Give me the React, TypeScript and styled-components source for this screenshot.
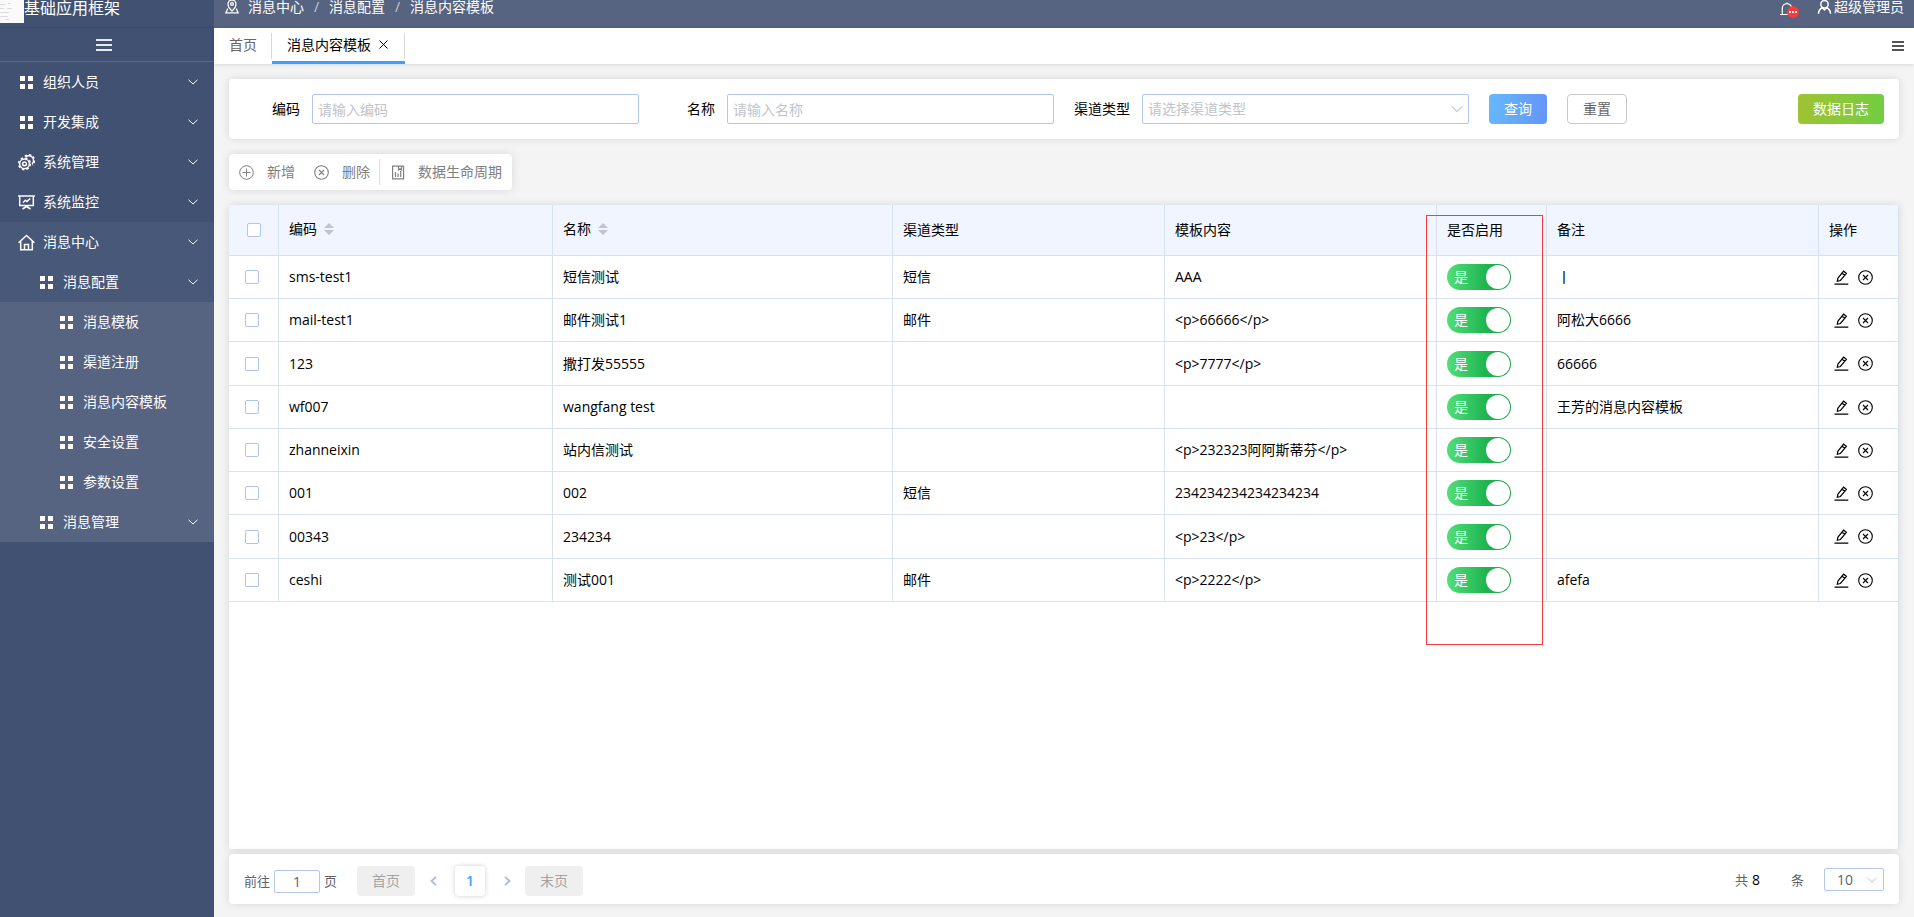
import React from "react";
import styled, { createGlobalStyle } from "styled-components";

const GlobalStyle = createGlobalStyle`
  *, *::before, *::after { box-sizing: border-box; }
  body {
    margin: 0;
    background: #f4f4f4;
    color: #000;
    font: 14px/20px "Open Sans", "Noto Sans CJK SC", sans-serif;
  }
  button, input, select { font: inherit; color: inherit; margin: 0; }
  button { border: 0; padding: 0; background: none; cursor: pointer; }
  a { color: inherit; text-decoration: none; }
  ul, ol { list-style: none; margin: 0; padding: 0; }
  svg { display: block; flex: none; }
`;

/* ---------- layout ---------- */

const Page = styled.div`
  display: flex;
  min-height: 100vh;
`;

const Sidebar = styled.aside`
  flex: none;
  width: 214px;
  background: #405172;
  color: #fff;
`;

const Brand = styled.div`
  display: flex;
  height: 28px;
  font-size: 16px;
  line-height: 16px;
  white-space: nowrap;
  border-bottom: 1px solid #3b4b6b;
`;

const CollapseButton = styled.button`
  display: flex;
  align-items: center;
  justify-content: center;
  width: 100%;
  height: 34px;
  padding-right: 6px;
  color: #e4e8ef;
  border-bottom: 1px solid #596886;
`;

const levelColors = ["transparent", "#475878", "#566482"];

const MenuGroup = styled.ul<{ $level: number }>`
  background: ${(p) => levelColors[p.$level]};
`;

const MenuItem = styled.button<{ $depth: number; $tone: number }>`
  display: flex;
  align-items: center;
  gap: 8px;
  width: 100%;
  height: 40px;
  padding: 0 16px 0 ${(p) => 18 + p.$depth * 20}px;
  background: ${(p) => levelColors[p.$tone]};
  text-align: left;
`;

const MenuLabel = styled.span`
  flex: 1;
`;

const Main = styled.div`
  display: flex;
  flex: 1;
  flex-direction: column;
  min-width: 0;
`;

const TopBar = styled.header`
  display: flex;
  align-items: flex-start;
  justify-content: space-between;
  height: 28px;
  padding: 0 10px 0 11px;
  background: #566482;
  color: #fff;
  line-height: 14px;
`;

const Location = styled.nav`
  display: flex;
  gap: 9px;
`;

const Breadcrumb = styled.ol`
  display: flex;

  li { display: flex; }
  li + li::before {
    content: "/";
    width: 25px;
    color: #c8cdd8;
    text-align: center;
  }
`;

const UserArea = styled.div`
  display: flex;
  gap: 18px;
`;

const BellButton = styled.button`
  position: relative;
  width: 19px;
  height: 18px;
`;

const BellBadge = styled.span`
  position: absolute;
  right: 0;
  bottom: 0;
  display: flex;
  align-items: center;
  justify-content: center;
  gap: 1px;
  width: 12px;
  height: 12px;
  border-radius: 50%;
  background: #f83b3b;

  i { width: 2px; height: 2px; background: #fff; }
`;

const UserButton = styled.button`
  display: flex;
  gap: 2px;
  line-height: 14px;
`;

const TabBar = styled.nav`
  display: flex;
  align-items: stretch;
  height: 36px;
  padding: 0 10px 0 15px;
  background: #fff;
  box-shadow: 0 1px 4px rgba(0, 0, 0, 0.12);
`;

const Tab = styled.div<{ $active?: boolean }>`
  position: relative;
  display: flex;
  align-items: center;
  gap: 8px;
  padding: ${(p) => (p.$active ? "0 17px 0 15px" : "0 15px 0 0")};
  color: ${(p) => (p.$active ? "#000" : "#666")};
  border-bottom: 3px solid ${(p) => (p.$active ? "#409eff" : "transparent")};

  &::after {
    content: "";
    position: absolute;
    top: 5px;
    right: 0;
    width: 1px;
    height: 26px;
    background: #d8d8d8;
  }
`;

const TabMenuButton = styled.button`
  margin-left: auto;
  color: #555;
`;

const Content = styled.main`
  display: flex;
  flex: 1;
  flex-direction: column;
  align-items: stretch;
  padding: 15px 15px 13px;
`;

const Panel = styled.section`
  background: #fff;
  border-radius: 4px;
  box-shadow: 0 0 8px rgba(0, 0, 0, 0.12);
`;

/* ---------- search form ---------- */

const SearchForm = styled.form`
  display: flex;
  align-items: center;
  gap: 20px;
  height: 60px;
  padding: 0 15px;
`;

const Field = styled.div`
  display: flex;
  flex: 0 1 395px;
  align-items: center;
  gap: 12px;
  min-width: 0;

  label { flex: none; width: 56px; text-align: right; }
`;

const TextInput = styled.input`
  flex: 1;
  min-width: 0;
  height: 30px;
  padding: 0 5px;
  border: 1px solid #b3c6ec;
  border-radius: 2px;
  background: #fff;
  outline: 0;

  &::placeholder { color: #c0c4cc; opacity: 1; }
`;

const SelectWrap = styled.div<{ $inset: number }>`
  position: relative;
  display: flex;
  flex: 1;
  min-width: 0;

  svg {
    position: absolute;
    top: 50%;
    right: ${(p) => p.$inset}px;
    transform: translateY(-50%);
    color: #b7c8e8;
    pointer-events: none;
  }
`;

const Select = styled.select<{ $small?: boolean }>`
  flex: 1;
  min-width: 0;
  height: ${(p) => (p.$small ? 23 : 30)}px;
  padding: 0 ${(p) => (p.$small ? 12 : 5)}px;
  border: 1px solid #b3c6ec;
  border-radius: 2px;
  background: #fff;
  color: ${(p) => (p.$small ? "#606266" : "#c0c4cc")};
  appearance: none;
  outline: 0;
`;

const buttonLooks = {
  primary: "background: linear-gradient(90deg, #66b8fb, #6495f9); color: #fff;",
  plain: "background: #fff; color: #666; border: 1px solid #c8c8c8;",
  success: "background: linear-gradient(90deg, #9fc332, #72cd43); color: #fff;",
  muted: "background: #efefef; color: #a3a3a3;",
};

const Button = styled.button<{ $look: keyof typeof buttonLooks; $end?: boolean }>`
  flex: none;
  height: 30px;
  padding: 0 15px;
  border-radius: 4px;
  white-space: nowrap;
  ${(p) => buttonLooks[p.$look]}
  ${(p) => (p.$end ? "margin-left: auto;" : "")}
`;

/* ---------- toolbar ---------- */

const Toolbar = styled(Panel)`
  display: flex;
  align-self: flex-start;
  align-items: center;
  height: 36px;
  margin: 15px 0;
  padding: 0 10px;
`;

const ToolButton = styled.button`
  display: flex;
  align-items: center;
  gap: 13px;
  color: #808080;

  & + & { margin-left: 19px; }
`;

const ToolDivider = styled.span`
  width: 1px;
  height: 26px;
  margin: 0 11px 0 9px;
  background: #d5deea;
`;

/* ---------- table ---------- */

const TablePanel = styled(Panel)`
  flex: 1;
  border-right: 1px solid #d9e2f0;
  border-radius: 2px;
`;

const Table = styled.table`
  width: 100%;
  table-layout: fixed;
  border-collapse: separate;
  border-spacing: 0;

  th, td {
    padding: 0 10px;
    border-bottom: 1px solid #d8e1ef;
    border-left: 1px solid #d8e1ef;
    font-weight: 400;
    text-align: left;
    white-space: nowrap;
  }
  th:first-child, td:first-child { border-left: 0; }
  th { position: relative; height: 51px; background: #f0f5ff; }
  td { height: 43px; }
  tbody tr:nth-child(4n + 3) td { height: 44px; }
  td:first-child { padding-left: 16px; }
  th:first-child { padding-left: 18px; }
`;

const Column = styled.col<{ $width?: number }>`
  ${(p) => (p.$width ? `width: ${p.$width}px;` : "")}
`;

const CheckBox = styled.input`
  display: block;
  width: 14px;
  height: 14px;
  appearance: none;
  background: #fff;
  border: 1px solid #b0c4ee;
  border-radius: 2px;
  &:checked { background: #409eff; }
`;

const SortButton = styled.button`
  display: flex;
  align-items: center;
  gap: 7px;
  padding-bottom: 2px;
`;

const Highlight = styled.span`
  position: absolute;
  z-index: 1;
  top: 10px;
  left: -11px;
  width: 117px;
  height: 430px;
  border: 1px solid #f53b3b;
  pointer-events: none;
`;

const Switch = styled.label`
  position: relative;
  display: flex;
  align-items: center;
  width: 64px;
  height: 26px;
  padding-left: 7px;
  border-radius: 13px;
  background: linear-gradient(90deg, #52de78, #1fb551 60%, #1aa548);
  color: #fff;
  cursor: pointer;

  input { position: absolute; opacity: 0; margin: 0; }
  &::after {
    content: "";
    position: absolute;
    top: 1px;
    right: 1px;
    width: 24px;
    height: 24px;
    border-radius: 50%;
    background: #fff;
  }
`;

const RowActions = styled.div`
  display: flex;
  gap: 9px;
  padding-left: 5px;
`;

/* ---------- pagination ---------- */

const Pagination = styled(Panel)`
  display: flex;
  align-items: center;
  height: 50px;
  margin-top: 5px;
  padding: 4px 15px 0;
  color: #606266;
`;

const JumpField = styled.label`
  display: flex;
  align-items: center;
  gap: 4px;
  margin-right: 20px;
  font-size: 13px;
`;

const JumpInput = styled(TextInput)`
  flex: none;
  width: 46px;
  height: 23px;
  font-size: 14px;
  text-align: center;
`;

const PageArrow = styled.button`
  display: flex;
  align-items: center;
  justify-content: center;
  width: 36px;
  height: 30px;
  color: #a9bbdf;
`;

const PageNumber = styled.button`
  width: 30px;
  height: 30px;
  margin: 0 4px;
  border-radius: 4px;
  box-shadow: 0 0 5px rgba(0, 0, 0, 0.2);
  color: #409eff;
  font-weight: 600;
`;

const Total = styled.span`
  display: flex;
  gap: 4px;
  margin-left: auto;
  margin-bottom: 3px;
  font-size: 13px;

  b { margin-right: 27px; color: #000; font-size: 14px; font-weight: 400; }
`;

const PageSize = styled.div`
  display: flex;
  width: 60px;
  margin: 0 0 3px 20px;
`;

/* ---------- icons ---------- */

const stroke = { fill: "none", stroke: "currentColor", strokeWidth: 1 } as const;

const GridIcon = () => (
  <svg width="17" height="17" viewBox="0 0 17 17" fill="currentColor">
    <path d="M2 2h5v5H2zM10 2h5v5h-5zM2 10h5v5H2zM10 10h5v5h-5z" />
  </svg>
);

const GearsIcon = () => (
  <svg width="17" height="17" viewBox="0 0 17 17" {...stroke}>
    <circle cx="6.500" cy="9.800" r="4.800" strokeWidth={1.400} />
    <circle cx="6.500" cy="9.800" r="5.900" strokeWidth={1.500} strokeDasharray="2.400 2.230" />
    <circle cx="6.500" cy="9.800" r="1.900" strokeWidth={1.500} />
    <path strokeWidth={1.400} d="M7.500 3A4.600 4.600 0 1 1 14 10" />
    <path strokeWidth={1.500} strokeDasharray="2.400 1.900" d="M6.800 2.300A5.700 5.700 0 1 1 14.500 11" />
  </svg>
);

const MonitorIcon = () => (
  <svg width="17" height="17" viewBox="0 0 17 17" {...stroke} strokeWidth={1.500}>
    <path d="M0 2h17M1.700 2v9.500h13.600V2M5 8.500l2.500-2.200 1.500 1.200 3.200-3M8.500 11.500v2M8.500 12.500L4.500 15M8.500 12.500l4 2.500" />
  </svg>
);

const HomeIcon = () => (
  <svg width="17" height="17" viewBox="0 0 17 17" {...stroke} strokeWidth={1.500}>
    <path d="M.6 8.800L8.500 1.500l7.900 7.300M2.700 7v8.700h11.600V7M6.500 15.500v-5h4v5" />
  </svg>
);

const menuIcons = { grid: GridIcon, gears: GearsIcon, monitor: MonitorIcon, home: HomeIcon };

const ChevronDown = ({ size = 10 }: { size?: number }) => (
  <svg width={size} height={size} viewBox="0 0 10 10" {...stroke}>
    <path d="M.5 2.800L5 7l4.500-4.200" />
  </svg>
);

const Bars = ({ width, gap, weight }: { width: number; gap: number; weight: number }) => (
  <svg width={width} height={gap * 2 + weight} fill="currentColor">
    {[0, 1, 2].map((i) => (
      <rect key={i} y={i * gap} width={width} height={weight} />
    ))}
  </svg>
);

const PinIcon = () => (
  <svg width="14" height="14" viewBox="0 0 14 14" {...stroke} strokeWidth={1.300}>
    <path d="M7 11C4.200 8.500 3 6.300 3 4a4 4 0 0 1 8 0C11 6.300 9.800 8.500 7 11z" />
    <circle cx="7" cy="4" r="1.400" />
    <path d="M2.800 8.500L.9 12.800h12.200L11.200 8.500" />
  </svg>
);

const BellIcon = () => (
  <svg width="14" height="16" viewBox="0 0 14 16" {...stroke} strokeWidth={1.200}>
    <path d="M0 13.500h14M2.300 13.500V7.300a4.700 4.700 0 0 1 9.400 0v6.200M7 2.600V1.500" />
  </svg>
);

const UserIcon = () => (
  <svg width="15" height="14" viewBox="0 0 15 14" {...stroke} strokeWidth={1.500}>
    <circle cx="7.500" cy="4.200" r="3.700" />
    <path d="M1.500 13.800c0-3 1.600-5 3.700-6.300l2.300 2.500 2.300-2.500c2.100 1.300 3.700 3.300 3.700 6.300" />
  </svg>
);

const CloseIcon = () => (
  <svg width="9" height="9" viewBox="0 0 9 9" {...stroke}>
    <path d="M.5.5l8 8M8.500.5l-8 8" />
  </svg>
);

const PlusCircle = () => (
  <svg width="15" height="15" viewBox="0 0 15 15" {...stroke}>
    <circle cx="7.500" cy="7.500" r="6.800" />
    <path d="M7.500 3.500v8M3.500 7.500h8" />
  </svg>
);

const CloseCircle = () => (
  <svg width="15" height="15" viewBox="0 0 15 15" {...stroke} strokeWidth={1.100}>
    <circle cx="7.500" cy="7.500" r="6.800" />
    <path d="M5 5l5 5M10 5l-5 5" />
  </svg>
);

const ReportIcon = () => (
  <svg width="14" height="15" viewBox="0 0 14 15" {...stroke} strokeWidth={1.200}>
    <path d="M1.600 1.100h11v12.800h-11zM4.500 12V7M7.100 12V8.500M9.700 12V6M7.500 1v4l1.500-1.300L10.500 5V1" />
  </svg>
);

const SortIcon = () => (
  <svg width="10" height="12" viewBox="0 0 10 12" fill="#c0c4cc">
    <path d="M0 5l5-5 5 5zM0 7l5 5 5-5z" />
  </svg>
);

const EditIcon = () => (
  <svg width="15" height="15" viewBox="0 0 15 15" {...stroke} strokeWidth={1.200}>
    <path d="M.5 14.200h13.800M3.300 11.300l.5-3L9.600 1.200l2.800 2.100-6 7.200zM8 3.200l2.800 2.100" />
  </svg>
);

const ArrowIcon = ({ next }: { next?: boolean }) => (
  <svg width="7" height="10" viewBox="0 0 7 10" {...stroke} strokeWidth={1.800}>
    <path d={next ? "M1 .8L5.500 5 1 9.200" : "M6 .8L1.500 5 6 9.200"} />
  </svg>
);

const LogoMark = () => (
  <svg width="24" height="23" viewBox="0 0 24 23">
    <path fill="#fafafa" d="M0 0h24v23H0z" />
    <path
      stroke="#dcdcdc"
      d="M0 4.500h5M8 3.500h3M0 8.500h4M7 8.500h5M0 12.500h9M0 16.500h8M5 19.500h4"
    />
  </svg>
);

/* ---------- data ---------- */

type MenuEntry = {
  label: string;
  icon: keyof typeof menuIcons;
  children?: MenuEntry[];
  expandable?: boolean;
};

const grid = (label: string): MenuEntry => ({ label, icon: "grid" });

const menu: MenuEntry[] = [
  { label: "组织人员", icon: "grid", expandable: true },
  { label: "开发集成", icon: "grid", expandable: true },
  { label: "系统管理", icon: "gears", expandable: true },
  { label: "系统监控", icon: "monitor", expandable: true },
  {
    label: "消息中心",
    icon: "home",
    expandable: true,
    children: [
      {
        label: "消息配置",
        icon: "grid",
        expandable: true,
        children: ["消息模板", "渠道注册", "消息内容模板", "安全设置", "参数设置"].map(grid),
      },
      { label: "消息管理", icon: "grid", expandable: true },
    ],
  },
];

const rows = [
  ["sms-test1", "短信测试", "短信", "AAA", "丨"],
  ["mail-test1", "邮件测试1", "邮件", "<p>66666</p>", "阿松大6666"],
  ["123", "撒打发55555", "", "<p>7777</p>", "66666"],
  ["wf007", "wangfang test", "", "", "王芳的消息内容模板"],
  ["zhanneixin", "站内信测试", "", "<p>232323阿阿斯蒂芬</p>", ""],
  ["001", "002", "短信", "234234234234234234", ""],
  ["00343", "234234", "", "<p>23</p>", ""],
  ["ceshi", "测试001", "邮件", "<p>2222</p>", "afefa"],
];

const MenuTree = ({ items, depth }: { items: MenuEntry[]; depth: number }) => (
  <MenuGroup $level={depth === 0 ? 0 : 2}>
    {items.map((item) => {
      const Icon = menuIcons[item.icon];
      return (
        <li key={item.label}>
          <MenuItem $depth={depth} $tone={item.children ? 1 : 0}>
            <Icon />
            <MenuLabel>{item.label}</MenuLabel>
            {item.expandable && <ChevronDown />}
          </MenuItem>
          {item.children && <MenuTree items={item.children} depth={depth + 1} />}
        </li>
      );
    })}
  </MenuGroup>
);

export default function App() {
  return (
    <Page>
      <GlobalStyle />
      <Sidebar>
        <Brand>
          <LogoMark />
          基础应用框架
        </Brand>
        <CollapseButton aria-label="收起菜单">
          <Bars width={16} gap={5} weight={2} />
        </CollapseButton>
        <MenuTree items={menu} depth={0} />
      </Sidebar>

      <Main>
        <TopBar>
          <Location>
            <PinIcon />
            <Breadcrumb>
              <li><a href="#center">消息中心</a></li>
              <li><a href="#config">消息配置</a></li>
              <li>消息内容模板</li>
            </Breadcrumb>
          </Location>
          <UserArea>
            <BellButton aria-label="通知">
              <BellIcon />
              <BellBadge><i /><i /><i /></BellBadge>
            </BellButton>
            <UserButton>
              <UserIcon />
              超级管理员
            </UserButton>
          </UserArea>
        </TopBar>

        <TabBar>
          <Tab><a href="#home">首页</a></Tab>
          <Tab $active>
            <a href="#template">消息内容模板</a>
            <button aria-label="关闭"><CloseIcon /></button>
          </Tab>
          <TabMenuButton aria-label="标签菜单">
            <Bars width={12} gap={4} weight={2} />
          </TabMenuButton>
        </TabBar>

        <Content>
          <Panel>
            <SearchForm onSubmit={(e) => e.preventDefault()}>
              <Field>
                <label htmlFor="code">编码</label>
                <TextInput id="code" placeholder="请输入编码" />
              </Field>
              <Field>
                <label htmlFor="name">名称</label>
                <TextInput id="name" placeholder="请输入名称" />
              </Field>
              <Field>
                <label htmlFor="channel">渠道类型</label>
                <SelectWrap $inset={6}>
                  <Select id="channel" defaultValue="">
                    <option value="">请选择渠道类型</option>
                    <option>短信</option>
                    <option>邮件</option>
                  </Select>
                  <ChevronDown size={12} />
                </SelectWrap>
              </Field>
              <Button $look="primary">查询</Button>
              <Button $look="plain" type="reset">重置</Button>
              <Button $look="success" type="button" $end>数据日志</Button>
            </SearchForm>
          </Panel>

          <Toolbar>
            <ToolButton><PlusCircle />新增</ToolButton>
            <ToolButton><CloseCircle />删除</ToolButton>
            <ToolDivider />
            <ToolButton><ReportIcon />数据生命周期</ToolButton>
          </Toolbar>

          <TablePanel>
            <Table>
              <colgroup>
                <Column $width={49} />
                <Column $width={274} />
                <Column />
                <Column $width={272} />
                <Column $width={272} />
                <Column $width={110} />
                <Column $width={272} />
                <Column $width={80} />
              </colgroup>
              <thead>
                <tr>
                  <th><CheckBox type="checkbox" aria-label="全选" /></th>
                  <th><SortButton>编码<SortIcon /></SortButton></th>
                  <th><SortButton>名称<SortIcon /></SortButton></th>
                  <th>渠道类型</th>
                  <th>模板内容</th>
                  <th>是否启用<Highlight /></th>
                  <th>备注</th>
                  <th>操作</th>
                </tr>
              </thead>
              <tbody>
                {rows.map(([code, name, channel, content, remark]) => (
                  <tr key={code}>
                    <td><CheckBox type="checkbox" aria-label={code} /></td>
                    <td>{code}</td>
                    <td>{name}</td>
                    <td>{channel}</td>
                    <td>{content}</td>
                    <td>
                      <Switch>
                        <input type="checkbox" defaultChecked />是
                      </Switch>
                    </td>
                    <td>{remark}</td>
                    <td>
                      <RowActions>
                        <button aria-label="编辑"><EditIcon /></button>
                        <button aria-label="删除"><CloseCircle /></button>
                      </RowActions>
                    </td>
                  </tr>
                ))}
              </tbody>
            </Table>
          </TablePanel>

          <Pagination>
            <JumpField>
              前往
              <JumpInput defaultValue="1" />
              页
            </JumpField>
            <Button $look="muted">首页</Button>
            <PageArrow aria-label="上一页"><ArrowIcon /></PageArrow>
            <PageNumber>1</PageNumber>
            <PageArrow aria-label="下一页"><ArrowIcon next /></PageArrow>
            <Button $look="muted">末页</Button>
            <Total>
              共 <b>8</b> 条
            </Total>
            <PageSize>
              <SelectWrap $inset={7}>
                <Select $small aria-label="每页条数" defaultValue="10">
                  <option>10</option>
                  <option>20</option>
                </Select>
                <ChevronDown size={10} />
              </SelectWrap>
            </PageSize>
          </Pagination>
        </Content>
      </Main>
    </Page>
  );
}
